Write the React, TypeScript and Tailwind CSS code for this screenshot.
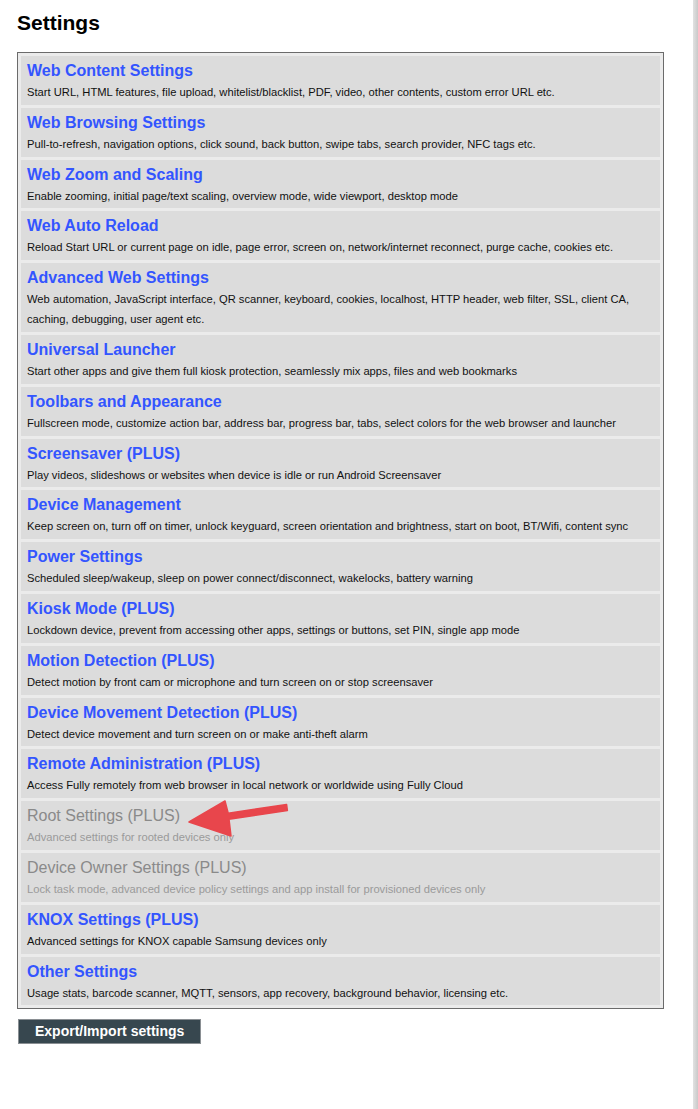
import React from "react";

type SettingsItem = {
  title: string;
  description: string;
  disabled?: boolean;
};

const items: SettingsItem[] = [
  {
    title: "Web Content Settings",
    description:
      "Start URL, HTML features, file upload, whitelist/blacklist, PDF, video, other contents, custom error URL etc.",
  },
  {
    title: "Web Browsing Settings",
    description:
      "Pull-to-refresh, navigation options, click sound, back button, swipe tabs, search provider, NFC tags etc.",
  },
  {
    title: "Web Zoom and Scaling",
    description:
      "Enable zooming, initial page/text scaling, overview mode, wide viewport, desktop mode",
  },
  {
    title: "Web Auto Reload",
    description:
      "Reload Start URL or current page on idle, page error, screen on, network/internet reconnect, purge cache, cookies etc.",
  },
  {
    title: "Advanced Web Settings",
    description:
      "Web automation, JavaScript interface, QR scanner, keyboard, cookies, localhost, HTTP header, web filter, SSL, client CA, caching, debugging, user agent etc.",
  },
  {
    title: "Universal Launcher",
    description:
      "Start other apps and give them full kiosk protection, seamlessly mix apps, files and web bookmarks",
  },
  {
    title: "Toolbars and Appearance",
    description:
      "Fullscreen mode, customize action bar, address bar, progress bar, tabs, select colors for the web browser and launcher",
  },
  {
    title: "Screensaver (PLUS)",
    description:
      "Play videos, slideshows or websites when device is idle or run Android Screensaver",
  },
  {
    title: "Device Management",
    description:
      "Keep screen on, turn off on timer, unlock keyguard, screen orientation and brightness, start on boot, BT/Wifi, content sync",
  },
  {
    title: "Power Settings",
    description:
      "Scheduled sleep/wakeup, sleep on power connect/disconnect, wakelocks, battery warning",
  },
  {
    title: "Kiosk Mode (PLUS)",
    description:
      "Lockdown device, prevent from accessing other apps, settings or buttons, set PIN, single app mode",
  },
  {
    title: "Motion Detection (PLUS)",
    description:
      "Detect motion by front cam or microphone and turn screen on or stop screensaver",
  },
  {
    title: "Device Movement Detection (PLUS)",
    description: "Detect device movement and turn screen on or make anti-theft alarm",
  },
  {
    title: "Remote Administration (PLUS)",
    description:
      "Access Fully remotely from web browser in local network or worldwide using Fully Cloud",
  },
  {
    title: "Root Settings (PLUS)",
    description: "Advanced settings for rooted devices only",
    disabled: true,
  },
  {
    title: "Device Owner Settings (PLUS)",
    description:
      "Lock task mode, advanced device policy settings and app install for provisioned devices only",
    disabled: true,
  },
  {
    title: "KNOX Settings (PLUS)",
    description: "Advanced settings for KNOX capable Samsung devices only",
  },
  {
    title: "Other Settings",
    description:
      "Usage stats, barcode scanner, MQTT, sensors, app recovery, background behavior, licensing etc.",
  },
];

export default function App() {
  return (
    <div
      className="relative flex min-h-screen w-full bg-white text-[#111]"
      style={{ fontFamily: '"Liberation Sans", Arial, sans-serif' }}
    >
      <main className="flex-1 pl-[17px] pt-[11px]">
        <h1 className="text-[21px] font-bold leading-[24px] text-black">Settings</h1>

        <div className="mt-[17px] flex w-[647px] flex-col gap-[3px] border border-[#6b6b6b] bg-[#ebebeb] p-[3px]">
          {items.map((item) => (
            <a
              key={item.title}
              href="#"
              className="block bg-[#dcdcdc] pb-[2.8px] pl-[6px] pr-2 pt-[4px]"
            >
              <p
                className={
                  item.disabled
                    ? "text-[16px] leading-[22px] text-[#8a8a8a]"
                    : "text-[16px] font-bold leading-[22px] text-[#3355ff]"
                }
              >
                {item.title}
              </p>
              <p
                className={
                  item.disabled
                    ? "text-[11.2px] leading-[20px] text-[#9a9a9a]"
                    : "text-[11.2px] leading-[20px] text-[#111]"
                }
              >
                {item.description}
              </p>
            </a>
          ))}
        </div>

        <button
          type="button"
          className="ml-px mt-[10px] h-[25px] border border-[#8a8f93] bg-[#37474f] px-[16px] text-[14px] font-bold leading-[23px] text-white"
        >
          Export/Import settings
        </button>
      </main>

      <div className="w-[5px] shrink-0 bg-gradient-to-r from-[#e2e2e2] to-[#c9c9c9]" />

      {/* annotation arrow pointing at Root Settings */}
      <svg
        className="pointer-events-none absolute left-[180px] top-[795px]"
        width="115"
        height="50"
        viewBox="0 0 115 50"
      >
        <polygon
          points="9,27 45,6 48.2,18.2 106.6,9.5 107.4,15.5 49,24.2 51,41"
          fill="#e8464c"
          stroke="#e8464c"
          strokeWidth="1.5"
          strokeLinejoin="round"
        />
      </svg>
    </div>
  );
}
